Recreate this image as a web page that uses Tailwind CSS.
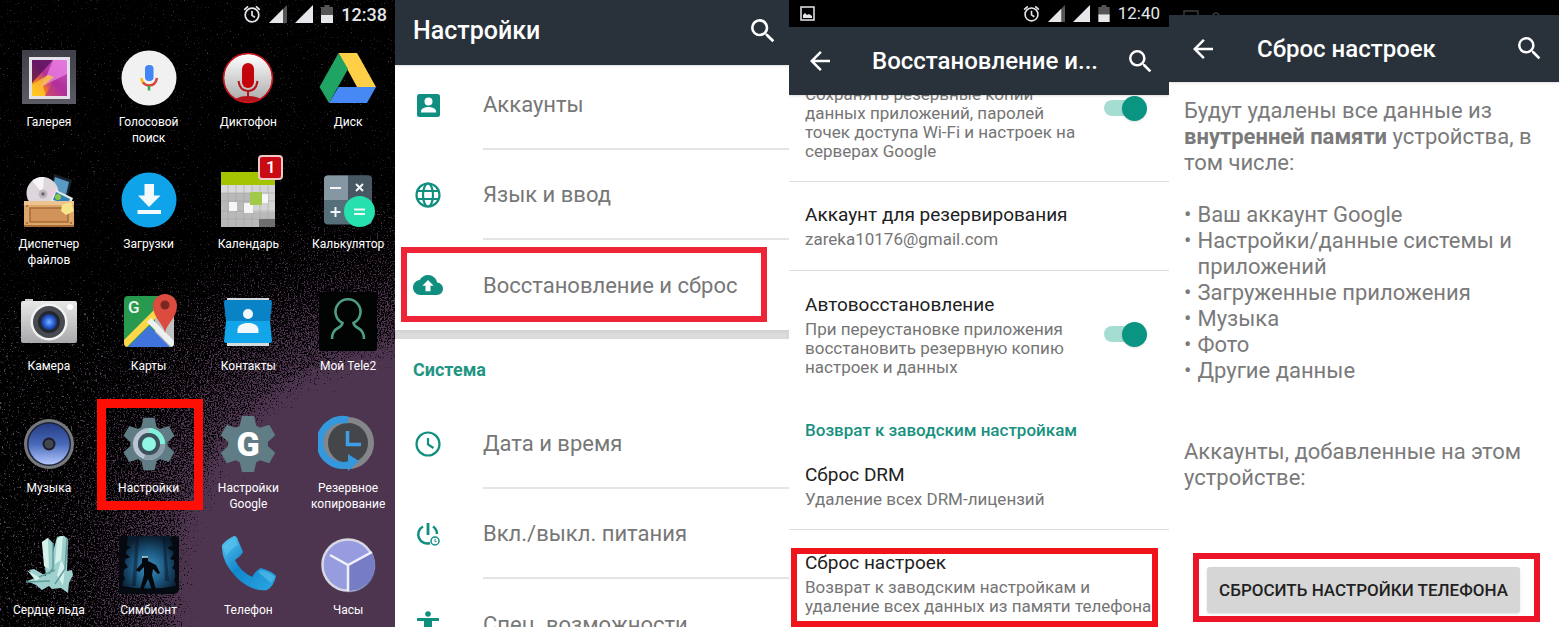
<!DOCTYPE html>
<html lang="ru">
<head>
    <meta charset="UTF-8">
    <meta name="viewport" content="width=device-width, initial-scale=1.0">
    <title>Сброс настроек телефона</title>
    <script src="https://cdn.jsdelivr.net/npm/@tailwindcss/browser@4"></script>
</head>
<body class="bg-white font-['Roboto','Liberation_Sans',sans-serif]">
    <!-- Общие иконки -->
    <svg class="hidden" aria-hidden="true">
        <symbol id="alarm" viewBox="0 0 18 18">
            <g fill="none" stroke="currentColor" stroke-width="1.7">
                <circle cx="9" cy="10" r="6.8"/>
                <path d="M9 6v4.4l3 2M1.2 4.8L5 1.4M16.8 4.8L13 1.4"/>
            </g>
        </symbol>
        <symbol id="signal-low" viewBox="0 0 18 18">
            <path d="M18 0v18H0z" fill="#555"/>
            <path d="M14 4v14H0z" fill="currentColor"/>
        </symbol>
        <symbol id="signal" viewBox="0 0 18 18"><path d="M18 0v18H0z" fill="currentColor"/></symbol>
        <symbol id="battery" viewBox="0 0 12 18">
            <path d="M3.5 0h5v2H12v9H0V2h3.5z" fill="#555"/>
            <path d="M0 10h12v8H0z" fill="currentColor"/>
        </symbol>
        <symbol id="search" viewBox="3 3 18 18">
            <path fill="currentColor" d="M15.5 14h-.79l-.28-.27A6.47 6.47 0 0 0 16 9.5 6.5 6.5 0 1 0 9.5 16c1.61 0 3.09-.59 4.23-1.57l.27.28v.79l5 4.99L20.49 19l-4.99-5zm-6 0C7.01 14 5 11.99 5 9.5S7.01 5 9.5 5 14 7.01 14 9.5 11.99 14 9.5 14z"/>
        </symbol>
        <symbol id="back" viewBox="4 4 16 16">
            <path fill="currentColor" d="M20 11H7.83l5.59-5.59L12 4l-8 8 8 8 1.41-1.41L7.83 13H20v-2z"/>
        </symbol>
        <symbol id="gear" viewBox="0 0 60 60">
            <g fill="#607d86">
                <circle cx="30" cy="30" r="20"/>
                <path id="tooth" d="M24 2h12l2.500 11h-17z"/>
                <use href="#tooth" transform="rotate(60 30 30)"/>
                <use href="#tooth" transform="rotate(120 30 30)"/>
                <use href="#tooth" transform="rotate(180 30 30)"/>
                <use href="#tooth" transform="rotate(240 30 30)"/>
                <use href="#tooth" transform="rotate(300 30 30)"/>
            </g>
        </symbol>
    </svg>

    <main class="grid h-screen grid-cols-[395fr_394fr_380fr_390fr] overflow-hidden">

        <!-- Экран 1: меню приложений -->
        <section class="relative overflow-hidden bg-black text-white">
            <svg class="absolute inset-0 h-full w-full" viewBox="0 0 395 627" preserveAspectRatio="xMaxYMax slice" aria-hidden="true">
                <defs>
                    <radialGradient id="glow" gradientUnits="userSpaceOnUse" cx="430" cy="600" r="430">
                        <stop offset="0" stop-color="#4d344f"/>
                        <stop offset=".52" stop-color="#4d344f"/>
                        <stop offset=".62" stop-color="#4d344f" stop-opacity=".62"/>
                        <stop offset=".78" stop-color="#4d344f" stop-opacity=".47"/>
                        <stop offset="1" stop-color="#4d344f" stop-opacity=".32"/>
                    </radialGradient>
                    <linearGradient id="dust" x1="0" y1="0" x2="0" y2="1">
                        <stop offset=".3" stop-color="#fff" stop-opacity="0"/>
                        <stop offset=".5" stop-color="#fff" stop-opacity=".34"/>
                        <stop offset="1" stop-color="#fff" stop-opacity=".37"/>
                    </linearGradient>
                    <filter id="grain" x="0" y="0" width="100%" height="100%" color-interpolation-filters="sRGB">
                        <feTurbulence type="fractalNoise" baseFrequency=".7" numOctaves="2" seed="4"/>
                        <feComposite in="SourceGraphic" operator="arithmetic" k2="1" k3="1" k4="-1" result="sum"/>
                        <feComponentTransfer in="sum" result="cut"><feFuncA type="linear" slope="6" intercept="0"/></feComponentTransfer>
                        <feFlood flood-color="#4d344f"/>
                        <feComposite in2="cut" operator="in"/>
                    </filter>
                    <filter id="stars" x="0" y="0" width="100%" height="100%" color-interpolation-filters="sRGB">
                        <feTurbulence type="fractalNoise" baseFrequency=".45" numOctaves="2" seed="9"/>
                        <feComposite in="SourceGraphic" operator="arithmetic" k2="1" k3="1" k4="-1" result="sum"/>
                        <feComponentTransfer in="sum" result="cut"><feFuncA type="linear" slope="7" intercept="0"/></feComponentTransfer>
                        <feFlood flood-color="#5c5360"/>
                        <feComposite in2="cut" operator="in"/>
                    </filter>
                </defs>
                <rect width="395" height="627" fill="url(#dust)" filter="url(#stars)"/>
                <rect width="395" height="627" fill="url(#glow)" filter="url(#grain)"/>
            </svg>

            <div class="relative flex h-7 items-center justify-end gap-1 pr-2 text-gray-200">
                <svg class="mr-1 size-[18px]"><use href="#alarm"/></svg>
                <svg class="mr-1 size-[18px]"><use href="#signal-low"/></svg>
                <svg class="mr-1 size-[18px]"><use href="#signal"/></svg>
                <svg class="mr-1 h-[18px] w-3"><use href="#battery"/></svg>
                <span class="text-[18px] font-medium">12:38</span>
            </div>

            <nav class="relative mt-5 -mr-[3px] -ml-px grid auto-rows-[122px] grid-cols-4 text-center text-[12px] leading-4">
                <a href="#" class="flex flex-col items-center gap-[6px]">
                    <svg class="size-[60px] shrink-0" viewBox="0 0 60 60">
                        <defs>
                            <linearGradient id="frame" x1="0" y1="0" x2="0" y2="1"><stop stop-color="#3e3f48"/><stop offset="1" stop-color="#5a5b64"/></linearGradient>
                            <linearGradient id="photo" x1="0" y1="1" x2="1" y2="0"><stop stop-color="#ffc400"/><stop offset=".28" stop-color="#f0702c"/><stop offset=".5" stop-color="#b3309a"/><stop offset="1" stop-color="#c84fc4"/></linearGradient>
                        </defs>
                        <rect x="3" y="2" width="54" height="54" fill="url(#frame)"/>
                        <rect x="10" y="9" width="41" height="42" fill="#e4e2e8"/>
                        <rect x="13" y="12" width="35" height="36" fill="url(#photo)"/>
                        <path d="M13 12h21L13 35z" fill="#551257" opacity=".8"/>
                        <path d="M34 12h14v14L20 40l8-13z" fill="#f58df0" opacity=".65"/>
                        <path d="M13 48V37l6-4 10-6 6 2-11 9 3 10z" fill="#ffd22e" opacity=".7"/>
                        <path d="M26 48l9-16 13 4v12z" fill="#b0309c" opacity=".65"/>
                    </svg>
                    <span class="w-20">Галерея</span>
                </a>
                <a href="#" class="flex flex-col items-center gap-[6px]">
                    <svg class="size-[60px] shrink-0" viewBox="0 0 60 60">
                        <circle cx="30" cy="30" r="27.500" fill="#f1f1f1"/>
                        <rect x="26" y="17" width="8.500" height="16" rx="4" fill="#4285f4"/>
                        <g fill="none" stroke-width="2.500">
                            <path d="M22.500 30q0 3 2 5" stroke="#fbbc05"/>
                            <path d="M24 34.500q2.500 3 6 3 6.500 0 8-7.500" stroke="#d8473a"/>
                            <path d="M30 38v4.500" stroke="#34a853"/>
                        </g>
                    </svg>
                    <span class="w-20">Голосовой поиск</span>
                </a>
                <a href="#" class="flex flex-col items-center gap-[6px]">
                    <svg class="size-[60px] shrink-0" viewBox="0 0 60 60">
                        <defs>
                            <linearGradient id="disc" x1="0" y1="0" x2="0" y2="1"><stop stop-color="#fff"/><stop offset="1" stop-color="#a9a9a9"/></linearGradient>
                            <clipPath id="discClip"><circle cx="30" cy="30" r="24"/></clipPath>
                        </defs>
                        <circle cx="30" cy="30" r="24" fill="url(#disc)"/>
                        <ellipse cx="30" cy="56" rx="16" ry="8" fill="#b5121a" clip-path="url(#discClip)"/>
                        <circle cx="30" cy="30" r="24.500" fill="none" stroke="#d3121d" stroke-width="1.500"/>
                        <rect x="24" y="15" width="12" height="25" rx="6" fill="#c4040d"/>
                        <path d="M20.500 33c1 7 5 10 9.500 10s8.500-3 9.500-10M30 43v7" fill="none" stroke="#b5121a" stroke-width="2"/>
                    </svg>
                    <span class="w-20">Диктофон</span>
                </a>
                <a href="#" class="flex flex-col items-center gap-[6px]">
                    <svg class="size-[60px] shrink-0" viewBox="0 0 60 60">
                        <path d="M20.500 5H39l19 34H39z" fill="#ffcf48"/>
                        <path d="M20.500 5L30 21 11 55 1.500 39z" fill="#1fa463"/>
                        <path d="M11 55l9.500-16H58l-9 16z" fill="#4688f4"/>
                    </svg>
                    <span class="w-20">Диск</span>
                </a>

                <a href="#" class="flex flex-col items-center gap-[6px]">
                    <svg class="size-[60px] shrink-0" viewBox="0 0 60 60">
                        <path d="M35 4l18 6-6 24-16-5z" fill="#18222c"/>
                        <path d="M36 7l14 5-4 17-14-4z" fill="#5a9bc6"/>
                        <circle cx="23.500" cy="23" r="16" fill="#dcd7dc"/>
                        <path d="M23.500 23L13 11a16 16 0 0 1 12-4z" fill="#f7f5f8"/>
                        <path d="M23.500 23l15-5a16 16 0 0 1 0 9z" fill="#eccfe0"/>
                        <circle cx="24" cy="24" r="4.500" fill="#bfb9bf"/>
                        <circle cx="24" cy="24" r="1.800" fill="#666"/>
                        <path d="M37 20l17 8-3 8-20-4z" fill="#e6ede8"/>
                        <path d="M37 22l14 7-2 5-15-4z" fill="#2f83b8"/>
                        <circle cx="39" cy="27" r="3" fill="#8fc43f"/>
                        <path d="M5 31h50v26H5z" fill="#dba76a"/>
                        <path d="M5 31h50v4H5z" fill="#edc48f"/>
                        <rect x="11" y="38" width="38" height="14" fill="#d1935a" stroke="#a86b35" stroke-width="1.500"/>
                        <path d="M43 35l9-3 3 9-8 4-5-4z" fill="#f8e48a"/>
                        <path d="M5 55h50v2H5z" fill="#a86b35"/>
                        <g fill="#9c6430"><circle cx="8" cy="36" r="1"/><circle cx="8" cy="53" r="1"/><circle cx="52" cy="53" r="1"/></g>
                    </svg>
                    <span class="w-20">Диспетчер файлов</span>
                </a>
                <a href="#" class="flex flex-col items-center gap-[6px]">
                    <svg class="size-[60px] shrink-0" viewBox="0 0 60 60">
                        <circle cx="30" cy="30" r="27.500" fill="#0fa4ea"/>
                        <path d="M25.500 14h9.500v11.500h6.500L30 37 19 25.500h6.500zM18.500 40H42v4H18.500z" fill="#f3fafd"/>
                    </svg>
                    <span class="w-20">Загрузки</span>
                </a>
                <a href="#" class="flex flex-col items-center gap-[6px]">
                    <span class="relative size-[60px] shrink-0">
                        <svg class="size-[60px]" viewBox="0 0 60 60">
                            <rect x="3" y="2" width="54" height="55" fill="#b9b9b9"/>
                            <rect x="3" y="2" width="54" height="13" fill="#a4c400"/>
                            <path d="M3 15h54v8H3z" fill="#d9d9d9"/>
                            <path d="M34 16h23v26H34z" fill="#d4d4d4"/>
                            <path d="M10 15v42M18 15v42M26 15v42M34 15v42M42 15v42M50 15v42M3 23h54M3 31h54M3 41h54M3 49h54" stroke="#a6a6a6" stroke-width=".6"/>
                            <path d="M11 32h8v9h-8zM26 33h9v10h-9zM43 24h7v9h-7z" fill="#f6f6f6"/>
                            <path d="M32 22h12v13H32z" fill="#a3c94b"/>
                            <path d="M41 49h16v8H41z" fill="#6f6f6f"/>
                        </svg>
                        <span class="absolute -top-[15px] -right-[5px] size-[25px] rounded-[4px] border-2 border-[#efc8c8] bg-[#c90a14] text-[17px] leading-[21px] font-medium">1</span>
                    </span>
                    <span class="w-20">Календарь</span>
                </a>
                <a href="#" class="flex flex-col items-center gap-[6px]">
                    <svg class="size-[60px] shrink-0" viewBox="0 0 60 60">
                        <rect x="6" y="5.500" width="48" height="49" rx="4" fill="#546e7a"/>
                        <path d="M10 5.500h20V30H6V9.500a4 4 0 0 1 4-4z" fill="#8497a3"/>
                        <path d="M30 5.500h20a4 4 0 0 1 4 4V30H30z" fill="#475862"/>
                        <circle cx="41.500" cy="41.500" r="15.500" fill="#26e0ae"/>
                        <path d="M12 18h11M38 14l7 7M45 14l-7 7M12.500 42h10M17.500 37v10M36 39.500h11M36 44h11" stroke="#f2f6f7" stroke-width="2" fill="none"/>
                    </svg>
                    <span class="w-20">Калькулятор</span>
                </a>

                <a href="#" class="flex flex-col items-center gap-[6px]">
                    <svg class="size-[60px] shrink-0" viewBox="0 0 60 60">
                        <defs>
                            <linearGradient id="body" x1="0" y1="0" x2="0" y2="1"><stop stop-color="#e8e8e8"/><stop offset="1" stop-color="#a9a9ab"/></linearGradient>
                            <radialGradient id="lens"><stop stop-color="#7ab4ff"/><stop offset=".6" stop-color="#2c62d9"/><stop offset="1" stop-color="#173582"/></radialGradient>
                        </defs>
                        <path d="M6 7h8v3H6z" fill="#c9c9c9"/>
                        <rect x="2" y="9" width="56" height="42" rx="2" fill="url(#body)"/>
                        <circle cx="30" cy="30" r="18.500" fill="#f2f2f2"/>
                        <circle cx="30" cy="30" r="16" fill="#474b50"/>
                        <circle cx="30" cy="30" r="11" fill="#23262c"/>
                        <circle cx="30" cy="30" r="8" fill="url(#lens)"/>
                        <circle cx="51" cy="15" r="3" fill="#fff"/>
                    </svg>
                    <span class="w-20">Камера</span>
                </a>
                <a href="#" class="flex flex-col items-center gap-[6px]">
                    <svg class="size-[60px] shrink-0" viewBox="0 0 60 60">
                        <defs><clipPath id="mapClip"><rect x="5" y="4" width="50" height="51" rx="4"/></clipPath></defs>
                        <g clip-path="url(#mapClip)">
                            <path d="M0 0h60v60H0z" fill="#279a50"/>
                            <path d="M36 20L60 4v56H36z" fill="#bfc1c2"/>
                            <path d="M30 34L56 60H4z" fill="#4173dc"/>
                            <path d="M0 58l38-38" stroke="#fdd748" stroke-width="7"/>
                            <path d="M30 28l30 30" stroke="#eef0f2" stroke-width="6"/>
                        </g>
                        <path d="M46 41c-1-9-12-15-12-27a12 12 0 0 1 24 0c0 12-11 18-12 27z" fill="#dd4b3e"/>
                        <circle cx="46" cy="13" r="4.500" fill="#7b2620"/>
                        <text x="9" y="21" font-size="17" font-weight="500" fill="#eef7ee">G</text>
                    </svg>
                    <span class="w-20">Карты</span>
                </a>
                <a href="#" class="flex flex-col items-center gap-[6px]">
                    <svg class="size-[60px] shrink-0" viewBox="0 0 60 60">
                        <path d="M9 6h42v4H9zM9 50h42v4H9z" fill="#d5dadd"/>
                        <path d="M7 8h46q1 2 1 3l-2 18H8L6 11q0-2 1-3z" fill="#0a83c6"/>
                        <path d="M8 29h44l2 20q0 2-2 2H8q-2 0-2-2z" fill="#12a5ea"/>
                        <circle cx="30" cy="22" r="5" fill="#f3f8fb"/>
                        <path d="M19.500 41v-3c0-5 5-7 10.500-7s10.500 2 10.500 7v3z" fill="#f3f8fb"/>
                    </svg>
                    <span class="w-20">Контакты</span>
                </a>
                <a href="#" class="flex flex-col items-center gap-[6px]">
                    <svg class="size-[60px] shrink-0" viewBox="0 0 60 60">
                        <rect x="1" width="58" height="59" rx="3" fill="#020303"/>
                        <path d="M14 47q0-8 6-11 4-2 4.500-5a12.500 12.500 0 1 1 11 0q.500 3 4.500 5 6 3 6 11" fill="none" stroke="#4e9c86" stroke-width="2.600"/>
                    </svg>
                    <span class="w-20">Мой Tele2</span>
                </a>

                <a href="#" class="flex flex-col items-center gap-[6px]">
                    <svg class="size-[60px] shrink-0" viewBox="0 0 60 60">
                        <defs><linearGradient id="cone" x1="0" y1="0" x2="0" y2="1"><stop stop-color="#253c84"/><stop offset=".5" stop-color="#4868b8"/><stop offset="1" stop-color="#b4c8ff"/></linearGradient></defs>
                        <circle cx="30" cy="30" r="25" fill="#77797c"/>
                        <circle cx="30" cy="30" r="22" fill="#1d2338"/>
                        <circle cx="30" cy="30" r="20.500" fill="url(#cone)"/>
                        <circle cx="30" cy="30" r="6.500" fill="#1c1f27"/>
                        <circle cx="30" cy="30" r="4.500" fill="#42464f"/>
                    </svg>
                    <span class="w-20">Музыка</span>
                </a>
                <a href="#" class="relative flex flex-col items-center gap-[6px]">
                    <span class="absolute -top-[15px] -right-1 -left-[2px] h-[111px] border-[9px] border-[#fd0f06]"></span>
                    <svg class="size-[60px] shrink-0" viewBox="0 0 60 60">
                        <use href="#gear" x="2" y="2" width="56" height="56"/>
                        <circle cx="30" cy="30" r="13.500" fill="none" stroke="#b9c5d0" stroke-width="5"/>
                        <path d="M30 16.500A13.500 13.500 0 0 1 43.500 30" fill="none" stroke="#80f3da" stroke-width="5"/>
                        <path d="M43.500 30a13.500 13.500 0 0 1-18 12.700" fill="none" stroke="#8b9ba7" stroke-width="5"/>
                        <circle cx="30" cy="30" r="11" fill="#3e525b"/>
                        <circle cx="30" cy="30" r="7" fill="#8ff7e2"/>
                    </svg>
                    <span class="w-20">Настройки</span>
                </a>
                <a href="#" class="flex flex-col items-center gap-[6px]">
                    <svg class="size-[60px] shrink-0" viewBox="0 0 60 60">
                        <use href="#gear" width="60" height="60"/>
                        <text x="30" y="42" text-anchor="middle" font-size="34" font-weight="900" fill="#fff">G</text>
                    </svg>
                    <span class="w-20">Настройки Google</span>
                </a>
                <a href="#" class="flex flex-col items-center gap-[6px]">
                    <svg class="size-[60px] shrink-0" viewBox="0 0 60 60">
                        <circle cx="30" cy="29" r="23" fill="#44464a" stroke="#85868a" stroke-width="6"/>
                        <path d="M30 6a23 23 0 1 0 3 44" fill="none" stroke="#3597dc" stroke-width="7"/>
                        <path d="M30 40l11 7-11 10z" fill="#3597dc"/>
                        <path d="M29.500 17v13.500H43" fill="none" stroke="#3da0e6" stroke-width="3.500"/>
                    </svg>
                    <span class="w-20">Резервное копирование</span>
                </a>

                <a href="#" class="flex flex-col items-center gap-[6px]">
                    <svg class="size-[60px] shrink-0" viewBox="0 0 60 60">
                        <path d="M23 6l6-4 5 5v9l4-15 6-2 5 4-1 32 5-1 1 5-4 8-1 10-7-5-9 1-3-3-7 4-6-5-9-4 8-3-6-8 5-1 12 7z" fill="#9ed0cd"/>
                        <path d="M23 6l6-4 1 31-5-3zM38 3l6-4-2 25-6 4zM8 34l13 8-4 3zM42 24l-4 15 6 10 2-17z" fill="#d4f1ec"/>
                        <path d="M34 7v25l-4 6M48 3l-2 30-10 15M20 41l16-7M7 46l24-1" stroke="#609d9c" stroke-width="1.500" fill="none"/>
                    </svg>
                    <span class="w-20">Сердце льда</span>
                </a>
                <a href="#" class="flex flex-col items-center gap-[6px]">
                    <svg class="size-[60px] shrink-0" viewBox="0 0 60 60">
                        <defs><radialGradient id="fog" cx=".5" cy=".6" r=".6"><stop stop-color="#3e92bd"/><stop offset=".5" stop-color="#1d5a83"/><stop offset="1" stop-color="#0a1d30"/></radialGradient></defs>
                        <rect y="0" width="60" height="58" rx="5" fill="#050a10"/>
                        <path d="M9 0h44l4 50q-28 5-54 0z" fill="url(#fog)"/>
                        <path d="M17 0h3l-3 50h-4zM44 0h2l4 45h-4z" fill="#07131f" opacity=".5"/>
                        <path d="M0 0l9 2-3 7 6 2-7 5 6 5-7 3 5 7-6 4 3 8-6 8zM60 0l-9 2 3 7-6 3 8 4-5 7 7 2-5 7 6 4-4 8 5 8z" fill="#050a10"/>
                        <path d="M23 23q2-4 6-2v4l8 4 4 8-2 1-5-5-1 6 4 15h-4l-4-11-5 11h-3l4-15v-8l-5 5-3-2 6-7z" fill="#04070c"/>
                        <path d="M23 21h6" stroke="#b8dceb" stroke-width="1.500"/>
                    </svg>
                    <span class="w-20">Симбионт</span>
                </a>
                <a href="#" class="flex flex-col items-center gap-[6px]">
                    <svg class="size-[60px] shrink-0" viewBox="0 0 60 60">
                        <defs><linearGradient id="tube" x1="0" y1="0" x2="1" y2="1"><stop stop-color="#5cc8f2"/><stop offset=".45" stop-color="#1287cd"/><stop offset="1" stop-color="#2ba6e2"/></linearGradient></defs>
                        <path d="M4 9q5-6 12-9 3 0 4 4l5 12q-2 4-8 8 5 11 17 17 5-8 9-9 11 3 15 8-2 10-9 14-15 2-30-12Q3 26 4 9z" fill="url(#tube)"/>
                        <path d="M5 11q5-5 12-9l3 7q-8 5-12 11zM40 36l3-2q9 2 14 7l-4 6q-6-5-13-11z" fill="#63caf0" opacity=".5"/>
                    </svg>
                    <span class="w-20">Телефон</span>
                </a>
                <a href="#" class="flex flex-col items-center gap-[6px]">
                    <svg class="size-[60px] shrink-0" viewBox="0 0 60 60">
                        <circle cx="31" cy="30" r="26.500" fill="#5c5f86"/>
                        <circle cx="30" cy="29" r="25.500" fill="#969cdf" stroke="#d8d8e2" stroke-width="2.500"/>
                        <path d="M30 29v26a26 26 0 0 0 24-38z" fill="#777dc4"/>
                        <path d="M12 19l18 10 24-13M30 29v26" fill="none" stroke="#f0f0f8" stroke-width="2.500"/>
                    </svg>
                    <span class="w-20">Часы</span>
                </a>
            </nav>
        </section>

        <!-- Экран 2: настройки -->
        <section class="overflow-hidden">
            <header class="relative z-10 flex h-[65px] items-center justify-between bg-[#29323a] px-[18px] pb-1 text-white shadow">
                <h1 class="text-[25px] font-medium">Настройки</h1>
                <button class="-mr-1" aria-label="Поиск"><svg class="size-6"><use href="#search"/></svg></button>
            </header>
            <ul class="-mt-[5px] text-[22px] text-[#777] shadow-md">
                <li class="flex h-[90px]">
                    <span class="flex w-[88px] shrink-0 items-center pl-[18px] text-[#108f80]">
                        <svg class="size-[30px]" viewBox="0 0 30 30">
                            <rect x="4" y="4" width="23" height="23" rx="2.500" fill="currentColor"/>
                            <circle cx="15.500" cy="11.500" r="4" fill="#fff"/>
                            <path d="M8 22.500v-1.200c0-3 5-4.300 7.500-4.300s7.500 1.300 7.500 4.300v1.200z" fill="#fff"/>
                        </svg>
                    </span>
                    <a href="#" class="flex flex-1 items-center border-b-2 border-[#e4e4e4]">Аккаунты</a>
                </li>
                <li class="flex h-[90px]">
                    <span class="flex w-[88px] shrink-0 items-center pl-[18px] text-[#108f80]">
                        <svg class="size-[30px]" viewBox="0 0 30 30" fill="none" stroke="currentColor" stroke-width="2.200">
                            <circle cx="15" cy="15" r="11.500"/>
                            <ellipse cx="15" cy="15" rx="5" ry="11.500"/>
                            <path d="M4.500 11h21M4.500 19h21"/>
                        </svg>
                    </span>
                    <a href="#" class="flex flex-1 items-center border-b-2 border-[#e4e4e4]">Язык и ввод</a>
                </li>
                <li class="relative flex h-[90px]">
                    <span class="flex w-[88px] shrink-0 items-center pl-[18px] text-[#108f80]">
                        <svg class="size-[30px]" viewBox="0 3 24 18">
                            <path fill="currentColor" d="M19.350 10.040C18.670 6.590 15.640 4 12 4 9.110 4 6.600 5.640 5.350 8.040 2.340 8.360 0 10.910 0 14c0 3.310 2.690 6 6 6h13c2.760 0 5-2.240 5-5 0-2.640-2.050-4.780-4.650-4.960z"/>
                            <path fill="#fff" d="M14 12.500V17h-4v-4.500H7.500L12 8l4.500 4.500z"/>
                        </svg>
                    </span>
                    <a href="#" class="flex flex-1 items-center">Восстановление и сброс</a>
                    <span class="absolute top-[7px] right-[22px] bottom-2 left-[6px] border-[6px] border-[#ee2437]"></span>
                </li>
            </ul>
            <div class="h-[9px] bg-[#dcdcdc] shadow-inner"></div>
            <h2 class="flex h-[60px] items-center pl-[18px] text-[18px] font-bold text-[#1f9583]">Система</h2>
            <ul class="text-[22px] text-[#777]">
                <li class="flex h-[90px]">
                    <span class="flex w-[88px] shrink-0 items-center pl-[18px] text-[#108f80]">
                        <svg class="size-[30px]" viewBox="0 0 30 30" fill="none" stroke="currentColor" stroke-width="2.200">
                            <circle cx="15" cy="15" r="11.500"/>
                            <path d="M15 9v6.500l5.500 3.500"/>
                        </svg>
                    </span>
                    <a href="#" class="flex flex-1 items-center border-b-2 border-[#e4e4e4]">Дата и время</a>
                </li>
                <li class="flex h-[90px]">
                    <span class="flex w-[88px] shrink-0 items-center pl-[18px] text-[#108f80]">
                        <svg class="size-[30px]" viewBox="0 0 30 30" fill="none" stroke="currentColor">
                            <path d="M15 4v12" stroke-width="2.800"/>
                            <path d="M10 7.500a9 9 0 0 0 7 16.500M20 7.500a9 9 0 0 1 4 7.500" stroke-width="2.500"/>
                            <circle cx="22" cy="22" r="4" stroke-width="1.500"/>
                            <path d="M22 20v2.500h1.500" stroke-width="1"/>
                        </svg>
                    </span>
                    <a href="#" class="flex flex-1 items-center border-b-2 border-[#e4e4e4]">Вкл./выкл. питания</a>
                </li>
                <li class="flex h-[90px]">
                    <span class="flex w-[88px] shrink-0 items-center pl-[18px] text-[#108f80]">
                        <svg class="size-[30px]" viewBox="0 0 30 30" fill="currentColor">
                            <circle cx="15" cy="5" r="2.800"/>
                            <path d="M4 9h22v3h-7v15h-3v-7h-2v7h-3V12H4z"/>
                        </svg>
                    </span>
                    <a href="#" class="flex flex-1 items-center">Спец. возможности</a>
                </li>
            </ul>
        </section>

        <!-- Экран 3: восстановление и сброс -->
        <section class="overflow-hidden text-[17px] leading-[19px] text-[#757575]">
            <div class="relative z-10 flex h-[27px] items-center gap-1 bg-black pr-[9px] pl-[11px] text-gray-200">
                <svg class="mr-auto size-[15px]" viewBox="0 0 15 15">
                    <rect x="1" y="1" width="13" height="13" fill="none" stroke="currentColor" stroke-width="1.500"/>
                    <path d="M3 12V9l2-2 2 2 2-1 3 2v2z" fill="currentColor"/>
                </svg>
                <svg class="mr-1 size-[17px]"><use href="#alarm"/></svg>
                <svg class="mr-1 size-[17px]"><use href="#signal-low"/></svg>
                <svg class="mr-1 size-[17px]"><use href="#signal"/></svg>
                <svg class="mr-1 h-[17px] w-3"><use href="#battery"/></svg>
                <span class="text-[17px]">12:40</span>
            </div>
            <header class="relative z-10 flex h-[68px] items-center bg-[#29323a] pr-[17px] pl-[21px] text-white shadow">
                <button aria-label="Назад"><svg class="size-5"><use href="#back"/></svg></button>
                <h1 class="ml-[42px] flex-1 text-[24px] leading-8 font-medium">Восстановление и...</h1>
                <button aria-label="Поиск"><svg class="size-[23px]"><use href="#search"/></svg></button>
            </header>
            <label class="-mt-[10px] flex items-start justify-between border-b border-[#dedede] pr-[22px] pb-5 pl-4">
                <span class="w-[275px]">Сохранять резервные копии данных приложений, паролей точек доступа Wi-Fi и настроек на серверах Google</span>
                <input type="checkbox" checked class="relative mt-[11px] h-[25px] w-[43px] shrink-0 appearance-none before:absolute before:top-1 before:left-0 before:h-4 before:w-9 before:rounded-full before:bg-[#a5ddd2] after:absolute after:top-0 after:right-0 after:size-[25px] after:rounded-full after:bg-[#0a9482] after:shadow">
            </label>
            <a href="#" class="block border-b border-[#dedede] px-4 pt-5 pb-[21px]">
                <span class="block text-[19px] leading-[26px] text-[#212121]">Аккаунт для резервирования</span>
                <span class="mt-[2px] block">zareka10176@gmail.com</span>
            </a>
            <label class="flex items-center justify-between pt-[21px] pr-[22px] pb-5 pl-4">
                <span class="w-[275px]">
                    <span class="block text-[19px] leading-[26px] text-[#212121]">Автовосстановление</span>
                    <span class="mt-[2px] block">При переустановке приложения восстановить резервную копию настроек и данных</span>
                </span>
                <input type="checkbox" checked class="relative h-[25px] w-[43px] shrink-0 appearance-none before:absolute before:top-1 before:left-0 before:h-4 before:w-9 before:rounded-full before:bg-[#a5ddd2] after:absolute after:top-0 after:right-0 after:size-[25px] after:rounded-full after:bg-[#0a9482] after:shadow">
            </label>
            <h2 class="px-4 pt-[22px] text-[17px] leading-[22px] font-medium text-[#17917f]">Возврат к заводским настройкам</h2>
            <a href="#" class="block border-b border-[#dedede] px-4 pt-[21px] pb-5">
                <span class="block text-[19px] leading-[26px] text-[#212121]">Сброс DRM</span>
                <span class="mt-[2px] block">Удаление всех DRM-лицензий</span>
            </a>
            <a href="#" class="relative block px-4 py-5">
                <span class="absolute top-[18px] right-[11px] bottom-[9px] left-[2px] border-[6px] border-[#ee1419]"></span>
                <span class="relative block text-[19px] leading-[26px] text-[#212121]">Сброс настроек</span>
                <span class="relative mt-[2px] block">Возврат к заводским настройкам и удаление всех данных из памяти телефона</span>
            </a>
        </section>

        <!-- Экран 4: подтверждение сброса -->
        <section class="overflow-hidden text-[22px] leading-[26px] text-[#7a7a7a]">
            <div class="h-[15px] overflow-hidden bg-black pt-[10px] pl-[14px]">
                <svg class="h-[15px] w-10" viewBox="0 0 40 15" fill="none" stroke="#3c3c3c" stroke-width="1.500">
                    <rect x="1" y="1" width="14" height="13"/>
                    <circle cx="33" cy="6" r="3"/>
                </svg>
            </div>
            <header class="relative flex h-[67px] items-center bg-[#29323a] pr-[18px] pl-6 text-white shadow">
                <button aria-label="Назад"><svg class="size-5"><use href="#back"/></svg></button>
                <h1 class="ml-[44px] flex-1 text-[24px] leading-8 font-medium">Сброс настроек</h1>
                <button aria-label="Поиск"><svg class="size-[23px]"><use href="#search"/></svg></button>
            </header>
            <div class="px-[15px] pt-4">
                <p>Будут удалены все данные из <b>внутренней памяти</b> устройства, в том числе:</p>
                <ul class="mt-[26px]">
                    <li class="flex gap-[6px]"><span>•</span>Ваш аккаунт Google</li>
                    <li class="flex gap-[6px]"><span>•</span>Настройки/данные системы и приложений</li>
                    <li class="flex gap-[6px]"><span>•</span>Загруженные приложения</li>
                    <li class="flex gap-[6px]"><span>•</span>Музыка</li>
                    <li class="flex gap-[6px]"><span>•</span>Фото</li>
                    <li class="flex gap-[6px]"><span>•</span>Другие данные</li>
                </ul>
                <p class="mt-[55px]">Аккаунты, добавленные на этом устройстве:</p>
            </div>
            <div class="mt-[62px] mr-[19px] ml-6 border-[6px] border-[#ec1527] pt-2 pr-[14px] pb-[3px] pl-2">
                <button class="h-[46px] w-full rounded-[3px] bg-[#d6d6d6] text-[17px] font-medium whitespace-nowrap text-[#222] shadow-sm">СБРОСИТЬ НАСТРОЙКИ ТЕЛЕФОНА</button>
            </div>
        </section>
    </main>
</body>
</html>
